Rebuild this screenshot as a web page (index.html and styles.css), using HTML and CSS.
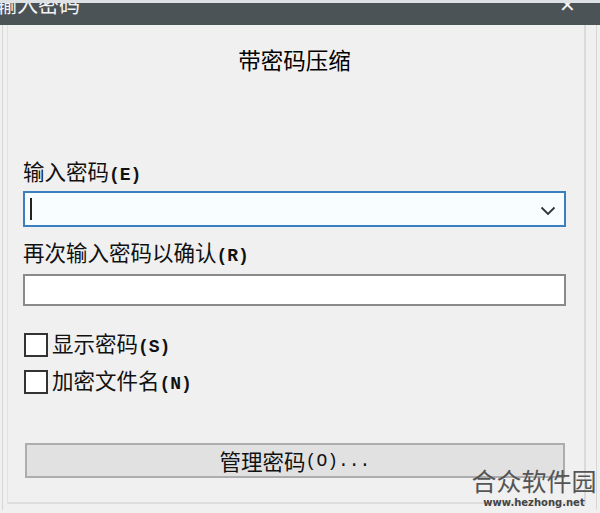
FILE: index.html
```html
<!DOCTYPE html>
<html lang="zh-CN">
<head>
<meta charset="utf-8">
<title>输入密码</title>
<link rel="stylesheet" href="styles.css">
</head>
<body>
<div class="titlebar">
  <span class="title-text">输入密码</span>
  <span class="close">✕</span>
</div>
<div class="frame">
  <div class="group">
    <h1 class="heading">带密码压缩</h1>
    <div class="field">
      <label class="label">输入密码<span class="acc">(E)</span></label>
      <div class="input input-active">
        <span class="caret"></span>
        <svg class="chev" width="16" height="10" viewBox="0 0 16 10"><path d="M1.5 1.5 L8 8 L14.5 1.5" fill="none" stroke="#333" stroke-width="1.8"/></svg>
      </div>
    </div>
    <div class="field field2">
      <label class="label">再次输入密码以确认<span class="acc">(R)</span></label>
      <div class="input input-plain"></div>
    </div>
    <div class="checks">
      <div class="check"><span class="box"></span><span class="ctext">显示密码<span class="acc">(S)</span></span></div>
      <div class="check"><span class="box"></span><span class="ctext">加密文件名<span class="acc">(N)</span></span></div>
    </div>
    <div class="btn">管理密码<span class="acc">(O)...</span></div>
  </div>
</div>
<div class="watermark">
  <div class="wm-big">合众软件园</div>
  <div class="wm-small">www.hezhong.net</div>
</div>
</body>
</html>
```

FILE: styles.css
```css
html, body {
  margin: 0;
  padding: 0;
}
body {
  width: 600px;
  height: 513px;
  overflow: hidden;
  background: #f0f0f0;
  font-family: "Noto Sans CJK SC", "Noto Sans", sans-serif;
  color: #111;
  position: relative;
}
.titlebar {
  height: 22px;
  border-top: 3px solid #dfe2e4;
  background: #4b5357;
  position: relative;
  overflow: hidden;
}
.title-text {
  position: absolute;
  left: -4px;
  top: -12px;
  font-size: 21px;
  line-height: 24px;
  color: #f4f4f4;
}
.close {
  position: absolute;
  right: 24px;
  top: -9px;
  font-size: 20px;
  line-height: 20px;
  color: #f4f4f4;
}
.frame {
  margin: 0 3px 0 2px;
  height: 485px;
  border-left: 1px solid #d6d6d6;
  border-right: 1px solid #d6d6d6;
  padding: 0 0 0 4px;
}
.group {
  height: 477px;
  margin-right: 10px;
  border-left: 1px solid #e2e2e2;
  border-right: 2px solid #dadada;
  border-bottom: 2px solid #dedede;
  padding: 0 18px 0 15px;
}
.heading {
  margin: 0;
  padding-top: 20px;
  font-size: 22.5px;
  font-weight: normal;
  line-height: 28px;
  text-align: center;
  color: #000;
}
.field {
  margin-top: 85px;
}
.field2 {
  margin-top: 12px;
}
.label {
  display: block;
  font-size: 21.5px;
  line-height: 25px;
  color: #111;
}
.acc {
  font-family: "Liberation Mono", monospace;
  font-size: 18px;
  font-weight: bold;
}
.input {
  margin-top: 3px;
  position: relative;
  display: flex;
  align-items: center;
}
.input-active {
  border: 2px solid #3c7fc1;
  background: #f8fdff;
  height: 32px;
}
.input-plain {
  border: 2px solid #8a8a8a;
  background: #ffffff;
  height: 28px;
  margin-top: 5px;
}
.caret {
  width: 2px;
  height: 22px;
  margin-left: 5px;
  background: #222;
}
.chev {
  margin-left: auto;
  margin-right: 8px;
  margin-top: 4px;
}
.checks {
  margin-top: 26px;
  display: flex;
  flex-direction: column;
  gap: 12px;
}
.check {
  display: flex;
  align-items: center;
  gap: 4px;
  padding-left: 1px;
  height: 25px;
}
.box {
  width: 20px;
  height: 20px;
  border: 2px solid #333;
  background: #fff;
}
.ctext {
  font-size: 21.5px;
  line-height: 25px;
}
.btn {
  margin-top: 49px;
  margin-left: 2px;
  margin-right: 1px;
  height: 31px;
  border: 2px solid #adadad;
  background: #e1e1e1;
  display: flex;
  align-items: center;
  justify-content: center;
  font-size: 21.5px;
  color: #111;
}
.btn .acc {
  font-weight: normal;
}
.watermark {
  position: absolute;
  left: 470px;
  top: 465px;
  width: 128px;
  text-align: center;
}
.wm-big {
  font-size: 25px;
  line-height: 30px;
  color: #555;
}
.wm-small {
  font-family: "DejaVu Sans", sans-serif;
  font-size: 10px;
  font-weight: bold;
  line-height: 12px;
  color: #444;
  margin-top: 2px;
}
```
